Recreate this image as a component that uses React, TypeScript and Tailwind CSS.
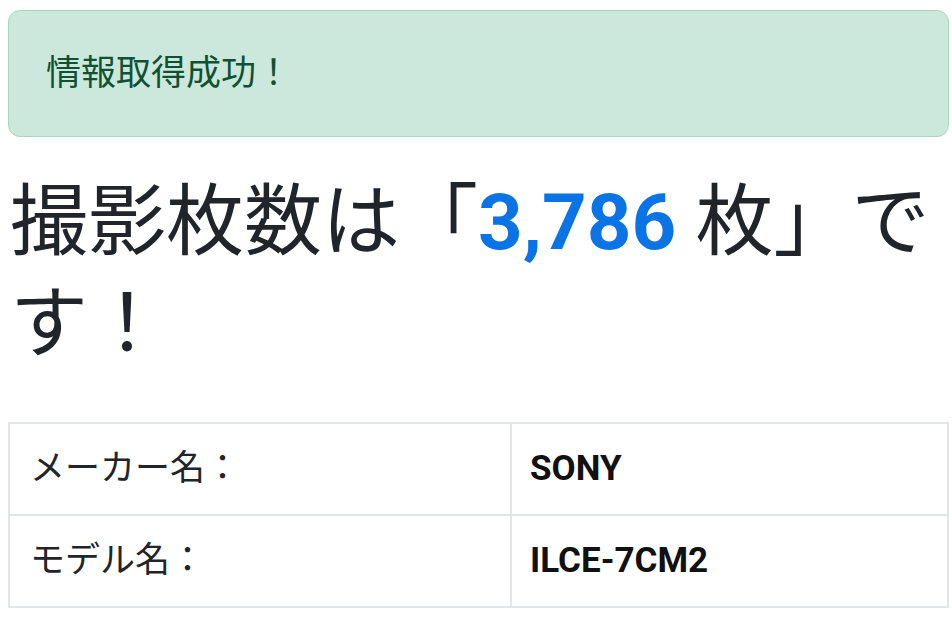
import React from "react";

export default function App() {
  const font = { fontFamily: 'Roboto, "Noto Sans CJK JP", sans-serif' };
  return (
    <div className="w-[952px] h-[618px] overflow-hidden bg-white text-[#212529]" style={font}>
      <div className="pl-[8px] pr-[3px] pt-[10px]">
        <div className="rounded-[12px] border-[1.5px] border-[#a9d6c0] bg-[#cce8dc] pl-[37px] pr-[20px] pt-[36px] pb-[36px] text-[35px] leading-[53px] text-[#0f5132]">
          情報取得成功！
        </div>
        <h1 className="mt-[35px] pl-[2px] text-[78px] leading-[102px] font-normal">
          撮影枚数は「<span className="font-bold text-[#0a73e6]">3,786</span> 枚」です！
        </h1>
        <table className="mt-[46px] w-full border-collapse text-[35px] leading-[52px]">
          <tbody>
            <tr>
              <td className="w-[502px] border-2 border-[#e3e6e8] pl-[20px] py-[19px]">メーカー名：</td>
              <td className="border-2 border-[#e3e6e8] pl-[18px] py-[19px] font-bold text-[#111]">SONY</td>
            </tr>
            <tr>
              <td className="w-[502px] border-2 border-[#e3e6e8] pl-[20px] py-[19px]">モデル名：</td>
              <td className="border-2 border-[#e3e6e8] pl-[18px] py-[19px] font-bold text-[#111]">ILCE-7CM2</td>
            </tr>
          </tbody>
        </table>
      </div>
    </div>
  );
}
